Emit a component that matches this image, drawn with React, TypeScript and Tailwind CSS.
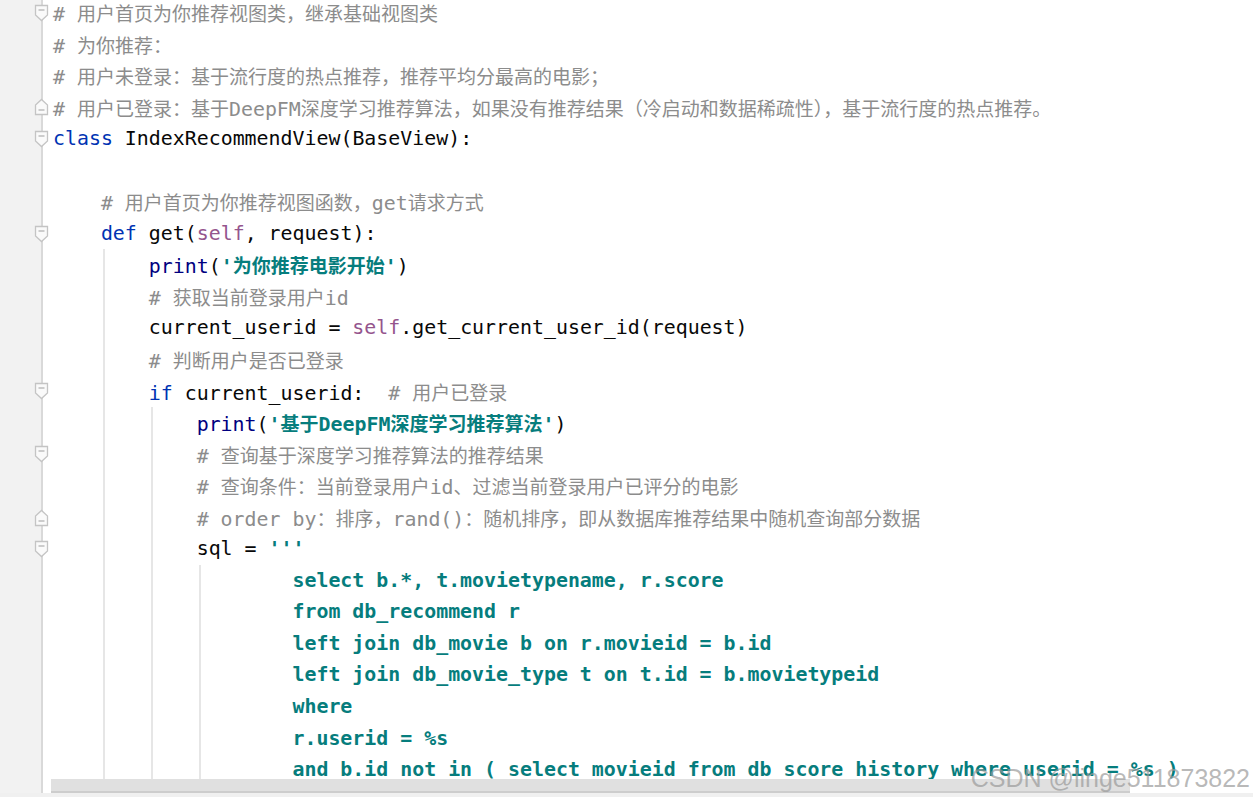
type Kind = "c" | "k" | "b" | "s" | "t" | "n";
type Tok = [string, Kind];
type Line = { indent: number; guides: number; toks: Tok[] };

const KIND_CLASS: Record<Kind, string> = {
  c: "text-[#8c8c8c]",
  k: "text-[#0033b3]",
  b: "text-[#000080]",
  s: "text-[#94558d]",
  t: "text-[#067d7d] font-bold",
  n: "text-[#080808]",
};

// fold markers in the gutter: "down" opens a block, "up" closes one
const FOLDS: Record<number, "down" | "up"> = {
  0: "down",
  3: "up",
  4: "down",
  7: "down",
  12: "down",
  14: "down",
  16: "up",
  17: "down",
};

const L = (indent: number, guides: number, toks: Tok[]): Line => ({ indent, guides, toks });

const LINES: Line[] = [
  L(0, 0, [["# 用户首页为你推荐视图类，继承基础视图类", "c"]]),
  L(0, 0, [["# 为你推荐：", "c"]]),
  L(0, 0, [["# 用户未登录：基于流行度的热点推荐，推荐平均分最高的电影；", "c"]]),
  L(0, 0, [["# 用户已登录：基于DeepFM深度学习推荐算法，如果没有推荐结果（冷启动和数据稀疏性），基于流行度的热点推荐。", "c"]]),
  L(0, 0, [["class", "k"], [" IndexRecommendView(BaseView):", "n"]]),
  L(0, 0, []),
  L(4, 0, [["# 用户首页为你推荐视图函数，get请求方式", "c"]]),
  L(4, 0, [["def", "k"], [" get(", "n"], ["self", "s"], [", request):", "n"]]),
  L(8, 1, [["print", "b"], ["(", "n"], ["'为你推荐电影开始'", "t"], [")", "n"]]),
  L(8, 1, [["# 获取当前登录用户id", "c"]]),
  L(8, 1, [["current_userid = ", "n"], ["self", "s"], [".get_current_user_id(request)", "n"]]),
  L(8, 1, [["# 判断用户是否已登录", "c"]]),
  L(8, 1, [["if", "k"], [" current_userid:  ", "n"], ["# 用户已登录", "c"]]),
  L(12, 2, [["print", "b"], ["(", "n"], ["'基于DeepFM深度学习推荐算法'", "t"], [")", "n"]]),
  L(12, 2, [["# 查询基于深度学习推荐算法的推荐结果", "c"]]),
  L(12, 2, [["# 查询条件：当前登录用户id、过滤当前登录用户已评分的电影", "c"]]),
  L(12, 2, [["# order by：排序，rand()：随机排序，即从数据库推荐结果中随机查询部分数据", "c"]]),
  L(12, 2, [["sql = ", "n"], ["'''", "t"]]),
  L(20, 3, [["select b.*, t.movietypename, r.score", "t"]]),
  L(20, 3, [["from db_recommend r", "t"]]),
  L(20, 3, [["left join db_movie b on r.movieid = b.id", "t"]]),
  L(20, 3, [["left join db_movie_type t on t.id = b.movietypeid", "t"]]),
  L(20, 3, [["where", "t"]]),
  L(20, 3, [["r.userid = %s", "t"]]),
  L(20, 3, [["and b.id not in ( select movieid from db_score_history where userid = %s )", "t"]]),
  L(20, 3, [["             ()", "t"]]),
];

const CJK = /([\u2E80-\u9FFF\u3000-\u303F\uFF00-\uFFEF]+)/;

function Segments({ text }: { text: string }) {
  const parts = text.split(CJK).filter((p) => p !== "");
  return (
    <>
      {parts.map((p, i) =>
        CJK.test(p) ? (
          <span key={i} className="text-[19px] font-['Noto_Sans_CJK_SC',sans-serif]">
            {p}
          </span>
        ) : (
          <span key={i}>{p}</span>
        )
      )}
    </>
  );
}

function FoldMarker({ dir }: { dir: "down" | "up" }) {
  const d =
    dir === "down"
      ? "M1.5 1.5 H13.5 V11 L7.5 16.5 L1.5 11 Z"
      : "M1.5 16.5 H13.5 V7 L7.5 1.5 L1.5 7 Z";
  const y = dir === "down" ? 6 : 12;
  return (
    <svg width="15" height="18" viewBox="0 0 15 18" className="absolute -right-[8px] top-1/2 -translate-y-1/2">
      <path d={d} fill="#fafafa" stroke="#c4c4c4" strokeWidth="1.3" />
      <line x1="4.5" y1={y} x2="10.5" y2={y} stroke="#b4b4b4" strokeWidth="1.3" />
    </svg>
  );
}

// leading whitespace, drawn in 4-column steps with the indent guides
function Indent({ indent, guides }: { indent: number; guides: number }) {
  const steps = Math.floor(indent / 4);
  return (
    <>
      {Array.from({ length: steps }, (_, k) => (
        <div key={k} className="w-[4ch] shrink-0 pl-[2px]">
          {k >= 1 && k <= guides && <div className="h-full w-[2px] bg-[#e6e6e6]" />}
        </div>
      ))}
    </>
  );
}

export default function App() {
  return (
    <div className="relative w-[1253px] h-[797px] overflow-hidden bg-white font-['DejaVu_Sans_Mono','Noto_Sans_CJK_SC',monospace] text-[19.9px]">
      {/* ── Code rows ── */}
      <div className="flex flex-col -mt-[3px]">
        {LINES.map((line, i) => (
          <div key={i} className="flex h-[31.55px]">
            <div className="relative w-[43px] shrink-0 bg-[#f2f2f2] border-r-2 border-[#d9d9d9]">
              {FOLDS[i] && <FoldMarker dir={FOLDS[i]} />}
            </div>
            <div className="flex pl-[10px]">
              <Indent indent={line.indent} guides={line.guides} />
              <div className="whitespace-pre leading-[31.55px]">
                {line.toks.map(([text, kind], j) => (
                  <span key={j} className={KIND_CLASS[kind]}>
                    <Segments text={text} />
                  </span>
                ))}
              </div>
            </div>
          </div>
        ))}
      </div>

      {/* ── Horizontal scrollbar ── */}
      <div className="absolute left-[51px] top-[779px] w-[1079px] h-[14px] bg-[#e0e0e0] border-b-2 border-[#cdcdcd]" />
      <div className="absolute left-0 right-0 bottom-0 h-[4px] bg-[#f0f0f0]" />

      {/* ── Watermark ── */}
      <div className="absolute right-[3px] bottom-[6px] text-[25px] leading-none text-[#9a9a9a]/70 font-['Liberation_Sans',sans-serif]">
        CSDN @linge511873822
      </div>
    </div>
  );
}
